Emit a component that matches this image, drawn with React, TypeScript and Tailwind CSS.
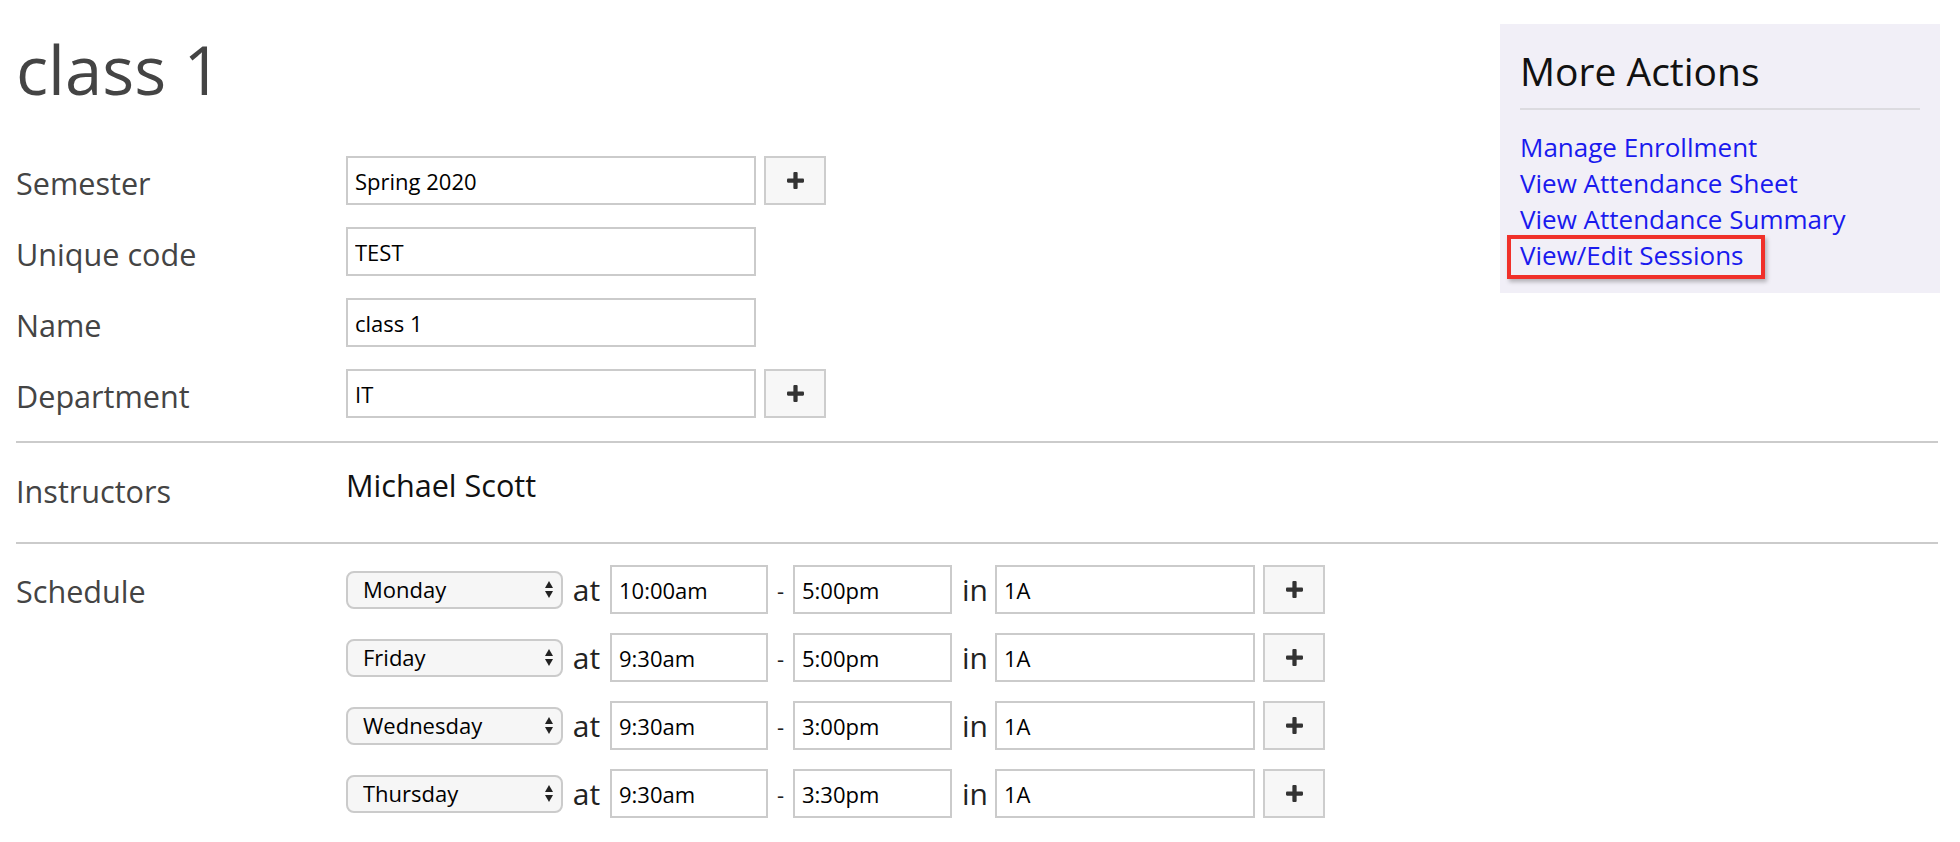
import React from 'react';

const fields = [
  { label: 'Semester', value: 'Spring 2020', add: true },
  { label: 'Unique code', value: 'TEST', add: false },
  { label: 'Name', value: 'class 1', add: false },
  { label: 'Department', value: 'IT', add: true },
];

const schedule = [
  { day: 'Monday', start: '10:00am', end: '5:00pm', room: '1A' },
  { day: 'Friday', start: '9:30am', end: '5:00pm', room: '1A' },
  { day: 'Wednesday', start: '9:30am', end: '3:00pm', room: '1A' },
  { day: 'Thursday', start: '9:30am', end: '3:30pm', room: '1A' },
];

const days = ['Monday', 'Tuesday', 'Wednesday', 'Thursday', 'Friday', 'Saturday', 'Sunday'];

function PlusButton() {
  return (
    <button className="flex h-[49px] w-[62px] shrink-0 items-center justify-center border-2 border-[#cdcdcd] bg-[#f7f7f7]">
      <svg width="17" height="17" viewBox="0 0 16 16" fill="#333">
        <rect x="0" y="6" width="16" height="4" rx="1" />
        <rect x="6" y="0" width="4" height="16" rx="1" />
      </svg>
    </button>
  );
}

function TextBox({ value, width }: { value: string; width: string }) {
  return (
    <input
      defaultValue={value}
      className={`h-[49px] ${width} shrink-0 border-2 border-[#cbcbcb] bg-white px-[7px] text-[22px] text-black outline-none`}
    />
  );
}

function DaySelect({ value }: { value: string }) {
  return (
    <div className="relative h-[38px] w-[217px] shrink-0">
      <select
        defaultValue={value}
        className="h-full w-full appearance-none rounded-[8px] border-2 border-[#cbcbcb] bg-[#f6f6f6] pl-[15px] text-[22px] text-black outline-none"
      >
        {days.map((d) => (
          <option key={d}>{d}</option>
        ))}
      </select>
      <svg className="pointer-events-none absolute right-[10px] top-[10px]" width="8" height="17" viewBox="0 0 8 17" fill="#222">
        <polygon points="0,7 4,0 8,7" />
        <polygon points="0,10 4,17 8,10" />
      </svg>
    </div>
  );
}

export default function App() {
  return (
    <div className="min-h-screen bg-white pl-4 pr-[22px] pt-6 font-['Open_Sans',sans-serif]">
      <div className="flex items-start justify-between">
        <div>
          <h1 className="mt-[5px] text-[67px] leading-[80px] text-[#444]">class 1</h1>
          <div className="mt-[47px] flex flex-col gap-[22px]">
            {fields.map((f) => (
              <div key={f.label} className="flex h-[49px] items-center">
                <span className="w-[330px] pt-[4px] text-[30.6px] leading-[42px] text-[#444]">{f.label}</span>
                <TextBox value={f.value} width="w-[410px]" />
                {f.add && (
                  <div className="ml-2">
                    <PlusButton />
                  </div>
                )}
              </div>
            ))}
          </div>
        </div>

        <aside className="-mr-[2px] w-[440px] bg-[#f1eff7] px-5 pb-5 pt-[23px]">
          <h2 className="text-[39px] leading-[48px] text-[#111]">More Actions</h2>
          <div className="mt-[13px] h-[2px] bg-[#dcdbe0]" />
          <ul className="mt-[19px] text-[26px] leading-[36px] text-[#1a1aee]">
            <li><a href="#">Manage Enrollment</a></li>
            <li><a href="#">View Attendance Sheet</a></li>
            <li><a href="#">View Attendance Summary</a></li>
            <li>
              <a href="#" className="relative">
                View/Edit Sessions
                <span className="absolute -left-[13px] -top-[2px] h-[44px] w-[258px] border-[4px] border-[#f0302a] shadow-[2px_3px_4px_rgba(0,0,0,0.25)]" />
              </a>
            </li>
          </ul>
        </aside>
      </div>

      <div className="mt-[23px] h-[2px] bg-[#cbcbcb]" />

      <div className="flex items-start pb-[30px] pt-[26px]">
        <span className="w-[330px] pt-[1px] text-[30.6px] leading-[42px] text-[#444]">Instructors</span>
        <span className="-mt-[5px] text-[30.6px] leading-[42px] text-[#111]">Michael Scott</span>
      </div>

      <div className="h-[2px] bg-[#cbcbcb]" />

      <div className="mt-[21px] flex items-start">
        <div className="flex h-[49px] w-[330px] items-center">
          <span className="pt-[2px] text-[30.6px] leading-[42px] text-[#444]">Schedule</span>
        </div>
        <div className="flex flex-col gap-[19px]">
          {schedule.map((s, i) => (
            <div key={i} className="flex h-[49px] items-center">
              <DaySelect value={s.day} />
              <span className="w-[47px] text-center text-[30px] leading-[42px] text-[#222]">at</span>
              <TextBox value={s.start} width="w-[158px]" />
              <span className="w-[25px] text-center text-[22px] leading-[42px] text-[#222]">-</span>
              <TextBox value={s.end} width="w-[159px]" />
              <span className="w-[43px] pl-[3px] text-center text-[30px] leading-[42px] text-[#222]">in</span>
              <TextBox value={s.room} width="w-[260px]" />
              <div className="ml-2">
                <PlusButton />
              </div>
            </div>
          ))}
        </div>
      </div>
    </div>
  );
}
